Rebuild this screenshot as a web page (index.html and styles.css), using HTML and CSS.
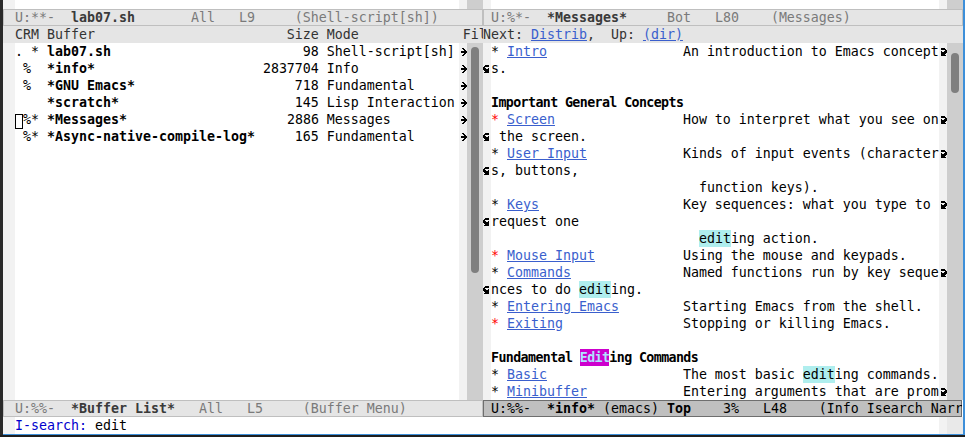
FILE: index.html
```
<!DOCTYPE html>
<html lang="en">
<head>
<meta charset="utf-8">
<title>Emacs</title>
<link rel="stylesheet" href="styles.css">
</head>
<body>
<svg class="defs" width="0" height="0" aria-hidden="true">
  <defs>
    <symbol id="rarr" viewBox="0 0 8 8"><path d="M3 0h2v1h-2zM4 1h2v1h-2zM5 2h2v1h-2zM2 3h6v2h-6zM5 5h2v1h-2zM4 6h2v1h-2zM3 7h2v1h-2z"/></symbol>
    <symbol id="lcurl" viewBox="0 0 8 8"><path d="M2 0h4v1h-4zM1 1h5v1h-5zM0 2h2v1h-2zM0 3h3v1h-3zM5 3h1v1h-1zM0 4h6v1h-6zM1 5h5v1h-5zM2 6h4v1h-4zM1 7h5v1h-5z"/></symbol>
    <symbol id="rcurl" viewBox="0 0 8 8"><path d="M2 0h4v1h-4zM2 1h5v1h-5zM6 2h2v1h-2zM2 3h1v1h-1zM5 3h3v1h-3zM2 4h6v1h-6zM2 5h5v1h-5zM2 6h4v1h-4zM2 7h5v1h-5z"/></symbol>
  </defs>
</svg>
<div class="desk">
  <div class="edge"></div>
  <div class="frame">
    <div class="windows">
      <section class="win win-left">
        <div class="stub"><div class="lf"></div><div class="tx"></div><div class="rf"></div><div class="sb"></div></div>
        <div class="ml ml-in">U:**-  <b>lab07.sh</b>       All   L9     (Shell-script[sh])</div>
        <div class="hl">CRM Buffer                        Size Mode             File</div>
        <div class="body">
          <div class="lf"></div>
          <div class="tx">
            <div class="ln">. * <b>lab07.sh</b>                        98 Shell-script[sh]</div>
            <div class="ln"> %  <b>*info*</b>                     2837704 Info</div>
            <div class="ln"> %  <b>*GNU Emacs*</b>                    718 Fundamental</div>
            <div class="ln">    <b>*scratch*</b>                      145 Lisp Interaction</div>
            <div class="ln"><span class="cursor"> </span>%* <b>*Messages*</b>                    2886 Messages</div>
            <div class="ln"> %* <b>*Async-native-compile-log*</b>     165 Fundamental</div>
          </div>
          <div class="rf">
            <div class="fc"><svg width="8" height="8"><use href="#rarr"/></svg></div>
            <div class="fc"><svg width="8" height="8"><use href="#rarr"/></svg></div>
            <div class="fc"><svg width="8" height="8"><use href="#rarr"/></svg></div>
            <div class="fc"><svg width="8" height="8"><use href="#rarr"/></svg></div>
            <div class="fc"><svg width="8" height="8"><use href="#rarr"/></svg></div>
            <div class="fc"><svg width="8" height="8"><use href="#rarr"/></svg></div>
          </div>
          <div class="sb"><div class="thumb"></div></div>
        </div>
        <div class="ml ml-in">U:%%-  <b>*Buffer List*</b>   All   L5     (Buffer Menu)</div>
      </section>
      <section class="win win-right">
        <div class="stub"><div class="lf"></div><div class="tx"></div><div class="rf"></div><div class="sb"></div></div>
        <div class="ml ml-in">U:%*-  <b>*Messages*</b>     Bot   L80    (Messages)</div>
        <div class="hl">Next: <span class="lnk">Distrib</span>,  Up: <span class="lnk">(dir)</span></div>
        <div class="body">
          <div class="lf">
            <div class="fc"></div>
            <div class="fc"><svg width="8" height="8"><use href="#lcurl"/></svg></div>
            <div class="fc"></div>
            <div class="fc"></div>
            <div class="fc"></div>
            <div class="fc"><svg width="8" height="8"><use href="#lcurl"/></svg></div>
            <div class="fc"></div>
            <div class="fc"><svg width="8" height="8"><use href="#lcurl"/></svg></div>
            <div class="fc"></div>
            <div class="fc"></div>
            <div class="fc"><svg width="8" height="8"><use href="#lcurl"/></svg></div>
            <div class="fc"></div>
            <div class="fc"></div>
            <div class="fc"></div>
            <div class="fc"><svg width="8" height="8"><use href="#lcurl"/></svg></div>
          </div>
          <div class="tx">
            <div class="ln"><span class="item">* <span class="lnk">Intro</span></span>An introduction to Emacs concept</div>
            <div class="ln">s.</div>
            <div class="ln"></div>
            <div class="ln hd">Important General Concepts</div>
            <div class="ln"><span class="item"><span class="red">*</span> <span class="lnk">Screen</span></span>How to interpret what you see on</div>
            <div class="ln"> the screen.</div>
            <div class="ln"><span class="item">* <span class="lnk">User Input</span></span>Kinds of input events (character</div>
            <div class="ln">s, buttons,</div>
            <div class="ln ind">function keys).</div>
            <div class="ln"><span class="item">* <span class="lnk">Keys</span></span>Key sequences: what you type to </div>
            <div class="ln">request one</div>
            <div class="ln ind"><span class="lazy">edit</span>ing action.</div>
            <div class="ln"><span class="item"><span class="red">*</span> <span class="lnk">Mouse Input</span></span>Using the mouse and keypads.</div>
            <div class="ln"><span class="item">* <span class="lnk">Commands</span></span>Named functions run by key seque</div>
            <div class="ln">nces to do <span class="lazy">edit</span>ing.</div>
            <div class="ln"><span class="item">* <span class="lnk">Entering Emacs</span></span>Starting Emacs from the shell.</div>
            <div class="ln"><span class="item"><span class="red">*</span> <span class="lnk">Exiting</span></span>Stopping or killing Emacs.</div>
            <div class="ln"></div>
            <div class="ln hd">Fundamental <span class="cur">Edit</span>ing Commands</div>
            <div class="ln"><span class="item">* <span class="lnk">Basic</span></span>The most basic <span class="lazy">edit</span>ing commands.</div>
            <div class="ln"><span class="item">* <span class="lnk">Minibuffer</span></span>Entering arguments that are prom</div>
          </div>
          <div class="rf">
            <div class="fc"><svg width="8" height="8"><use href="#rcurl"/></svg></div>
            <div class="fc"></div>
            <div class="fc"></div>
            <div class="fc"></div>
            <div class="fc"><svg width="8" height="8"><use href="#rcurl"/></svg></div>
            <div class="fc"></div>
            <div class="fc"><svg width="8" height="8"><use href="#rcurl"/></svg></div>
            <div class="fc"></div>
            <div class="fc"></div>
            <div class="fc"><svg width="8" height="8"><use href="#rcurl"/></svg></div>
            <div class="fc"></div>
            <div class="fc"></div>
            <div class="fc"></div>
            <div class="fc"><svg width="8" height="8"><use href="#rcurl"/></svg></div>
            <div class="fc"></div>
            <div class="fc"></div>
            <div class="fc"></div>
            <div class="fc"></div>
            <div class="fc"></div>
            <div class="fc"></div>
            <div class="fc"><svg width="8" height="8"><use href="#rcurl"/></svg></div>
          </div>
          <div class="sb"><div class="thumb"></div></div>
        </div>
        <div class="ml ml-act">U:%%-  <b>*info*</b> (emacs) <b>Top</b>    3%   L48    (Info Isearch Narrow)</div>
      </section>
    </div>
    <div class="mini">
      <div class="lf"></div>
      <div class="tx mini-tx"><span class="prompt">I-search: </span>edit</div>
      <div class="rf"></div>
      <div class="sb mini-sb"></div>
    </div>
  </div>
</div>
</body>
</html>
```
FILE: styles.css
```
* { box-sizing: border-box; }
html, body { margin: 0; padding: 0; }
body {
  width: 965px;
  height: 437px;
  overflow: hidden;
  background: #1e1e1e;
  font-family: "DejaVu Sans Mono", monospace;
  font-size: 13.29px;
  line-height: 17px;
  color: #000;
}
.defs { position: absolute; width: 0; height: 0; overflow: hidden; }
.desk { display: flex; height: 435px; }
.edge { width: 3px; flex: none; background: #2a2a2a; }
.frame {
  width: 962px;
  height: 435px;
  flex: none;
  display: flex;
  flex-direction: column;
  background: #fff;
  border-right: 2px solid #3d8fd9;
  border-bottom: 1px solid #3d8fd9;
}
.windows { display: flex; height: 417px; }
.win { width: 480px; display: flex; flex-direction: column; }
.stub { display: flex; height: 9px; }
.body { display: flex; height: 357px; }
.lf, .rf { flex: none; background: #f2f2f2; }
.rf { width: 8px; }
.win-left .lf { width: 12px; }
.win-left .tx { width: 444px; }
.win-right .lf { width: 8px; }
.win-right .tx { width: 448px; }
.tx { flex: none; background: #fff; overflow: hidden; }
.sb { flex: none; width: 16px; background: #cecece; }
.ln { height: 17px; white-space: pre; }
.fc { height: 17px; display: flex; align-items: center; }
.fc svg { display: block; fill: #000; }
.thumb { width: 8px; margin-left: 4px; border-radius: 4px; background: #7f7f7f; }
.win-left .thumb { margin-top: 4px; height: 226px; }
.win-right .thumb { margin-top: 10px; height: 40px; }

.ml { height: 17px; white-space: pre; overflow: hidden; }
.win-left .ml { padding-left: 12px; }
.win-right .ml { padding-left: 8px; }
.ml-in { background: #e5e5e5; box-shadow: inset 0 0 0 1px #bfbfbf; color: #7a7a7a; }
.ml-in b { color: #3a3a3a; }
.ml-act {
  background: #bfbfbf;
  color: #000;
  box-shadow: inset 0 1px 0 #6e6e6e, inset 0 -1px 0 #6e6e6e, inset -1px 0 0 #6e6e6e, inset 1px 0 0 #6e6e6e;
  margin-right: 1px;
}

.hl { height: 17px; background: #e5e5e5; color: #333; white-space: pre; overflow: hidden; }
.win-left .hl { padding-left: 12px; }

.lnk { color: #3a5fcd; text-decoration: underline; text-underline-offset: 1px; }
.red { color: #ff0000; }
.item { display: inline-block; width: 24ch; }
.ind { padding-left: 26ch; }
.hd { font-weight: bold; letter-spacing: -0.6px; }
.lazy { display: inline-block; background: #afeeee; height: 17px; vertical-align: top; }
.cur { display: inline-block; background: #cd00cd; color: #b0e2ff; height: 17px; vertical-align: top; }
.cursor { display: inline-block; width: 8px; height: 15px; box-shadow: inset 0 0 0 1px #000; vertical-align: -3px; }

.mini { display: flex; height: 17px; }
.mini .lf { width: 12px; }
.mini .tx { width: 924px; }
.mini-tx { white-space: pre; }
.mini-sb { background: #e9e9e9; }
.prompt { color: #0000cd; }
```
